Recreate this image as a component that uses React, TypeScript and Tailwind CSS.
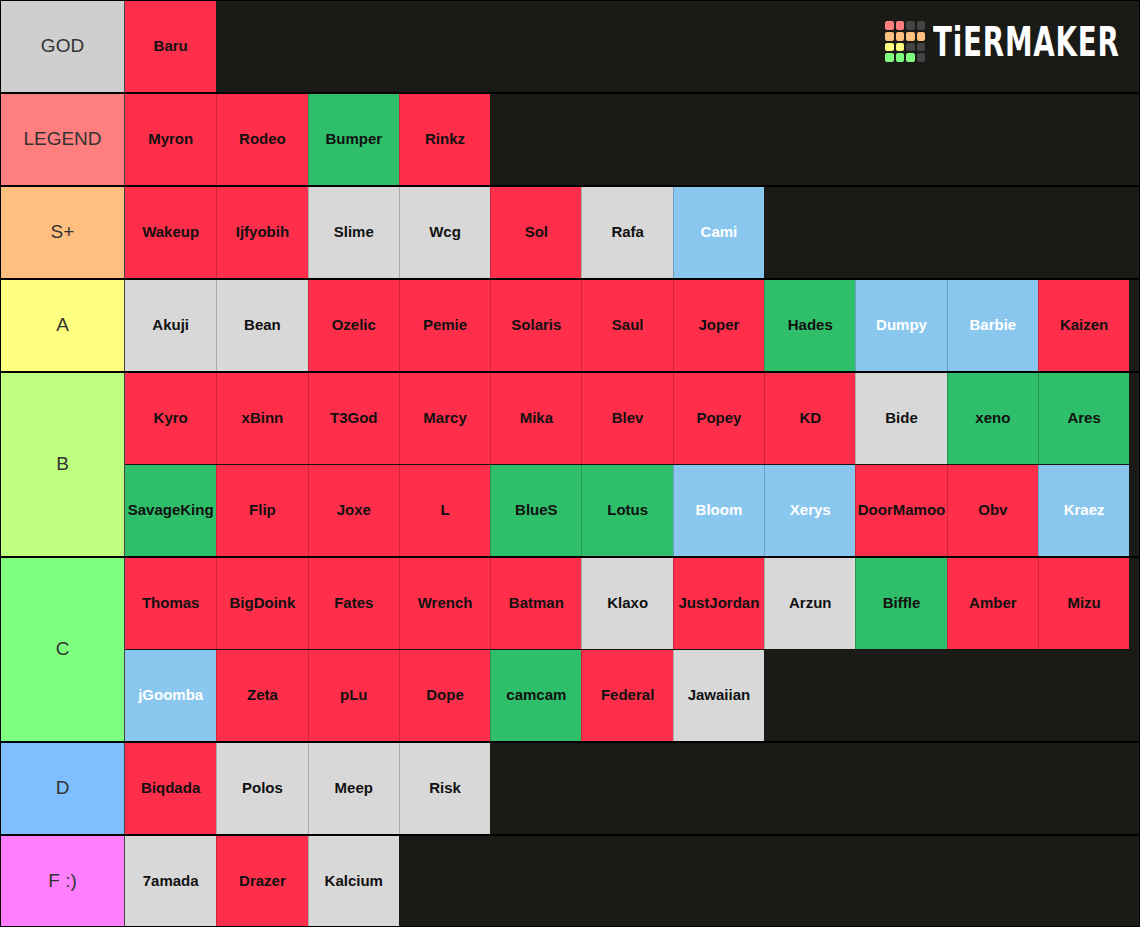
import React from "react"

type Color = "r" | "g" | "w" | "b"

type Tier = {
    label: string
    bg: string
    items: [string, Color][]
}

const ITEM_BG: Record<Color, string> = {
    r: "bg-[#ff2e4a] text-[#111]",
    g: "bg-[#2fbe6a] text-[#111]",
    w: "bg-[#d8d8d8] text-[#111]",
    b: "bg-[#89c7ef] text-white",
}

const TIERS: Tier[] = [
    { label: "GOD", bg: "bg-[#cfcfcf]", items: [["Baru", "r"]] },
    {
        label: "LEGEND",
        bg: "bg-[#ff7f7f]",
        items: [["Myron", "r"], ["Rodeo", "r"], ["Bumper", "g"], ["Rinkz", "r"]],
    },
    {
        label: "S+",
        bg: "bg-[#ffbf7f]",
        items: [["Wakeup", "r"], ["Ijfyobih", "r"], ["Slime", "w"], ["Wcg", "w"], ["Sol", "r"], ["Rafa", "w"], ["Cami", "b"]],
    },
    {
        label: "A",
        bg: "bg-[#ffff7f]",
        items: [
            ["Akuji", "w"], ["Bean", "w"], ["Ozelic", "r"], ["Pemie", "r"], ["Solaris", "r"], ["Saul", "r"],
            ["Joper", "r"], ["Hades", "g"], ["Dumpy", "b"], ["Barbie", "b"], ["Kaizen", "r"],
        ],
    },
    {
        label: "B",
        bg: "bg-[#bfff7f]",
        items: [
            ["Kyro", "r"], ["xBinn", "r"], ["T3God", "r"], ["Marcy", "r"], ["Mika", "r"], ["Blev", "r"],
            ["Popey", "r"], ["KD", "r"], ["Bide", "w"], ["xeno", "g"], ["Ares", "g"],
            ["SavageKing", "g"], ["Flip", "r"], ["Joxe", "r"], ["L", "r"], ["BlueS", "g"], ["Lotus", "g"],
            ["Bloom", "b"], ["Xerys", "b"], ["DoorMamoo", "r"], ["Obv", "r"], ["Kraez", "b"],
        ],
    },
    {
        label: "C",
        bg: "bg-[#7fff7f]",
        items: [
            ["Thomas", "r"], ["BigDoink", "r"], ["Fates", "r"], ["Wrench", "r"], ["Batman", "r"], ["Klaxo", "w"],
            ["JustJordan", "r"], ["Arzun", "w"], ["Biffle", "g"], ["Amber", "r"], ["Mizu", "r"],
            ["jGoomba", "b"], ["Zeta", "r"], ["pLu", "r"], ["Dope", "r"], ["camcam", "g"], ["Federal", "r"],
            ["Jawaiian", "w"],
        ],
    },
    {
        label: "D",
        bg: "bg-[#7fbfff]",
        items: [["Biqdada", "r"], ["Polos", "w"], ["Meep", "w"], ["Risk", "w"]],
    },
    {
        label: "F :)",
        bg: "bg-[#ff7fff]",
        items: [["7amada", "w"], ["Drazer", "r"], ["Kalcium", "w"]],
    },
]

const PER_LINE = 11

function chunk<T>(list: T[], size: number): T[][] {
    const out: T[][] = []
    for (let i = 0; i < list.length; i += size) out.push(list.slice(i, i + size))
    return out
}

function Logo() {
    // 4x4 block grid, same order as the TierMaker mark
    const cells = [
        "bg-[#ff7f7f]", "bg-[#ff7f7f]", "bg-[#444]", "bg-[#444]",
        "bg-[#ffbf7f]", "bg-[#ffbf7f]", "bg-[#ffbf7f]", "bg-[#ffbf7f]",
        "bg-[#ffff7f]", "bg-[#ffff7f]", "bg-[#444]", "bg-[#444]",
        "bg-[#7fff7f]", "bg-[#7fff7f]", "bg-[#7fff7f]", "bg-[#444]",
    ]
    return (
        <div className="absolute left-[884px] top-[20px] flex h-[41px] w-max items-center">
            <div className="grid shrink-0 grid-cols-[repeat(4,8.6px)] gap-[2px]">
                {cells.map((c, i) => (
                    <div key={i} className={`h-[8.6px] w-[8.6px] rounded-[2px] ${c}`} />
                ))}
            </div>
            <span className="ml-[8px] shrink-0 origin-left font-['DejaVu_Sans',sans-serif] text-[34px] font-bold leading-none tracking-[1px] text-white [transform:scale(0.815,1.2)]">
                TiERMAKER
            </span>
        </div>
    )
}

function Item({ name, color, first }: { name: string; color: Color; first: boolean }) {
    return (
        <div
            className={`flex h-[91px] w-[91.3px] shrink-0 items-center justify-center ${first ? "" : "border-l border-black/20"} text-[15px] font-bold ${ITEM_BG[color]}`}
        >
            {name}
        </div>
    )
}

export default function App() {
    return (
        <div className="relative h-[927px] w-[1140px] overflow-hidden border border-black bg-[#1a1a17] font-['Liberation_Sans',Arial,sans-serif]">
            <Logo />
            {TIERS.map((tier) => (
                <div key={tier.label} className="flex border-b-2 border-black">
                    <div
                        className={`flex w-[124px] shrink-0 items-center justify-center border-r border-[#444] text-[19px] text-[#333] ${tier.bg}`}
                    >
                        {tier.label}
                    </div>
                    <div className="flex flex-col">
                        {chunk(tier.items, PER_LINE).map((line, li) => (
                            <div key={li} className={`flex ${li > 0 ? "border-t border-black/20" : ""}`}>
                                {line.map(([name, color], i) => (
                                    <Item key={name} name={name} color={color} first={i === 0} />
                                ))}
                            </div>
                        ))}
                    </div>
                </div>
            ))}
        </div>
    )
}
